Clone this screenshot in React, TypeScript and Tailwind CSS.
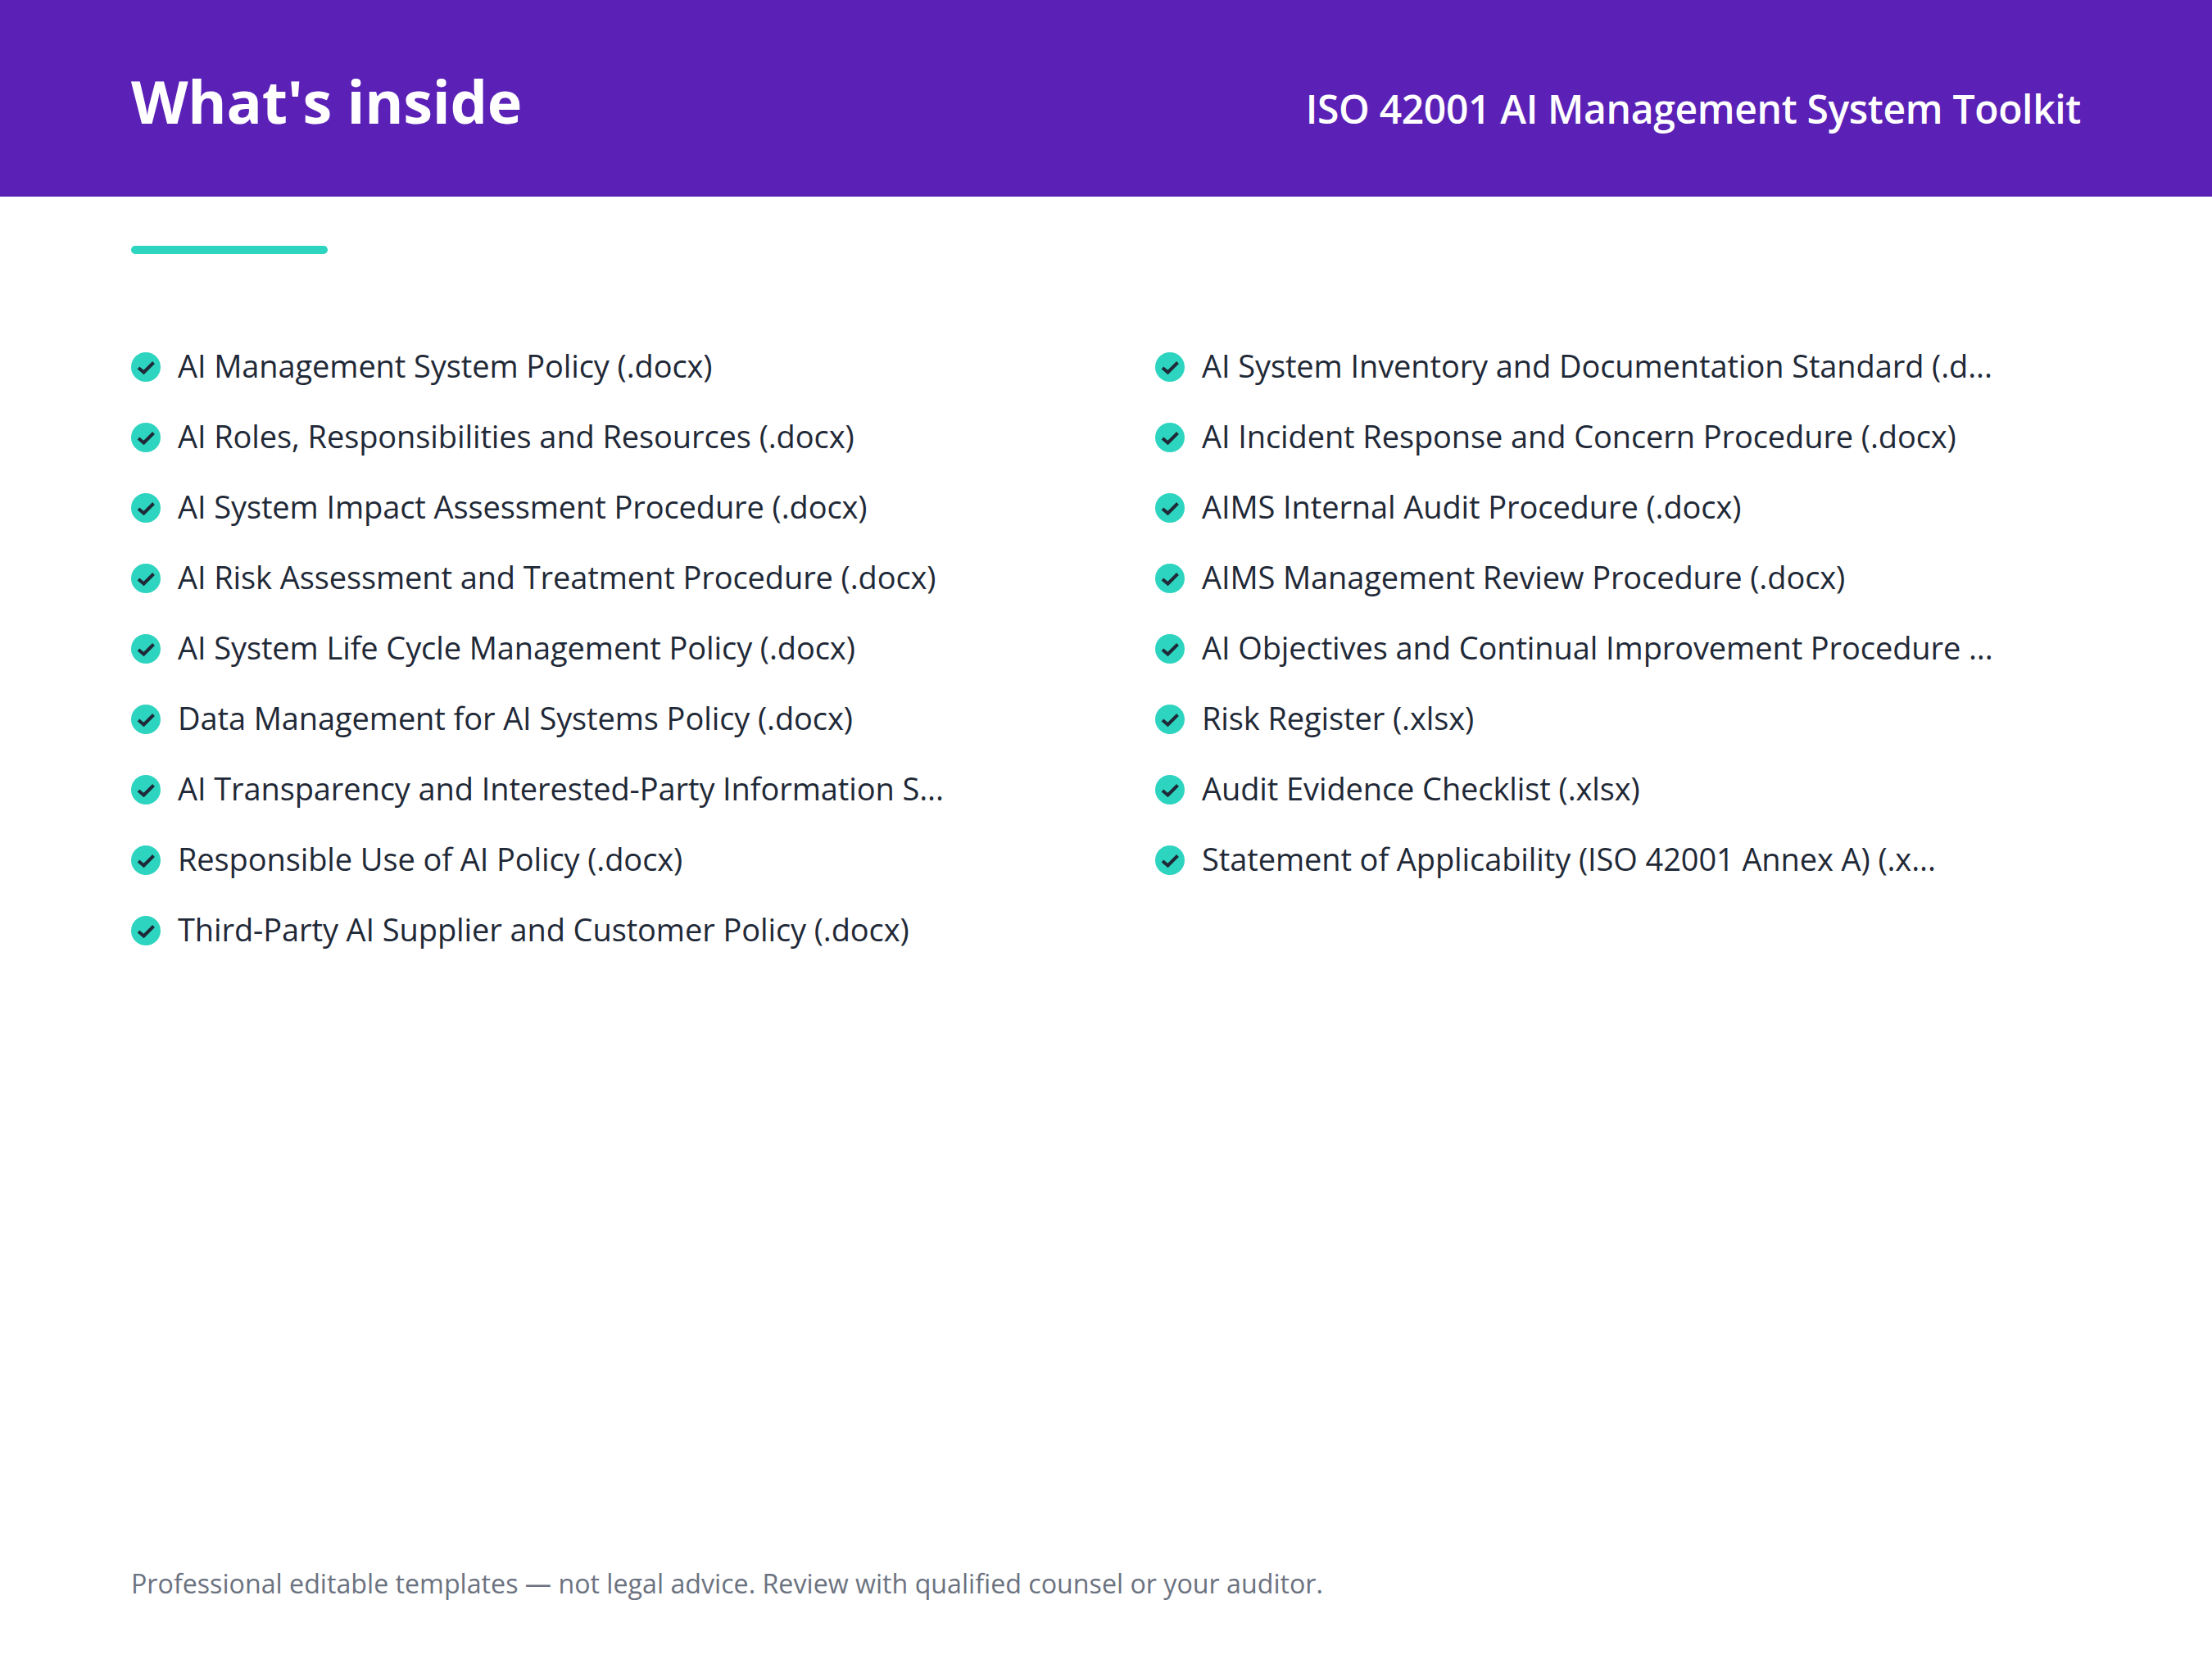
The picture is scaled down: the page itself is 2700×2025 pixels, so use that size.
import React from "react";

const leftItems = [
  "AI Management System Policy (.docx)",
  "AI Roles, Responsibilities and Resources (.docx)",
  "AI System Impact Assessment Procedure (.docx)",
  "AI Risk Assessment and Treatment Procedure (.docx)",
  "AI System Life Cycle Management Policy (.docx)",
  "Data Management for AI Systems Policy (.docx)",
  "AI Transparency and Interested-Party Information S...",
  "Responsible Use of AI Policy (.docx)",
  "Third-Party AI Supplier and Customer Policy (.docx)",
];

const rightItems = [
  "AI System Inventory and Documentation Standard (.d...",
  "AI Incident Response and Concern Procedure (.docx)",
  "AIMS Internal Audit Procedure (.docx)",
  "AIMS Management Review Procedure (.docx)",
  "AI Objectives and Continual Improvement Procedure ...",
  "Risk Register (.xlsx)",
  "Audit Evidence Checklist (.xlsx)",
  "Statement of Applicability (ISO 42001 Annex A) (.x...",
];

function CheckItem({ label }: { label: string }) {
  return (
    <li className="flex h-[86px] items-center gap-[21px]">
      <svg viewBox="0 0 36 36" className="h-9 w-9 shrink-0">
        <circle cx="18" cy="18" r="18" fill="#2dd4bf" />
        <path d="M9 19l6.5 5.5L27.5 12.5" fill="none" stroke="#1f2937" strokeWidth="4" />
      </svg>
      <span className="whitespace-nowrap pb-[5px] text-[38px] leading-none tracking-[-0.1px] text-[#1f2937]">{label}</span>
    </li>
  );
}

export default function App() {
  return (
    <div className="flex h-[2025px] w-[2700px] flex-col bg-white font-['Open_Sans','Noto_Sans',sans-serif]">
      <header className="flex h-[240px] items-center justify-between bg-[#5b21b6] px-[160px] text-white">
        <h1 className="pt-[6px] text-[72px] font-bold leading-none tracking-[-0.26px]">What's inside</h1>
        <p className="pt-[25px] text-[48px] font-semibold leading-none tracking-[-0.34px]">ISO 42001 AI Management System Toolkit</p>
      </header>
      <div className="mx-[160px] mt-[60px] h-[10px] w-[240px] rounded-full bg-[#2dd4bf]" />
      <div className="mt-[95px] grid grid-cols-[1250px_1fr] pl-[160px]">
        <ul>
          {leftItems.map((item) => (
            <CheckItem key={item} label={item} />
          ))}
        </ul>
        <ul>
          {rightItems.map((item) => (
            <CheckItem key={item} label={item} />
          ))}
        </ul>
      </div>
      <footer className="mt-auto pb-[76px] pl-[160px] text-[32.2px] leading-none text-[#6b7280]">
        Professional editable templates — not legal advice. Review with qualified counsel or your auditor.
      </footer>
    </div>
  );
}
